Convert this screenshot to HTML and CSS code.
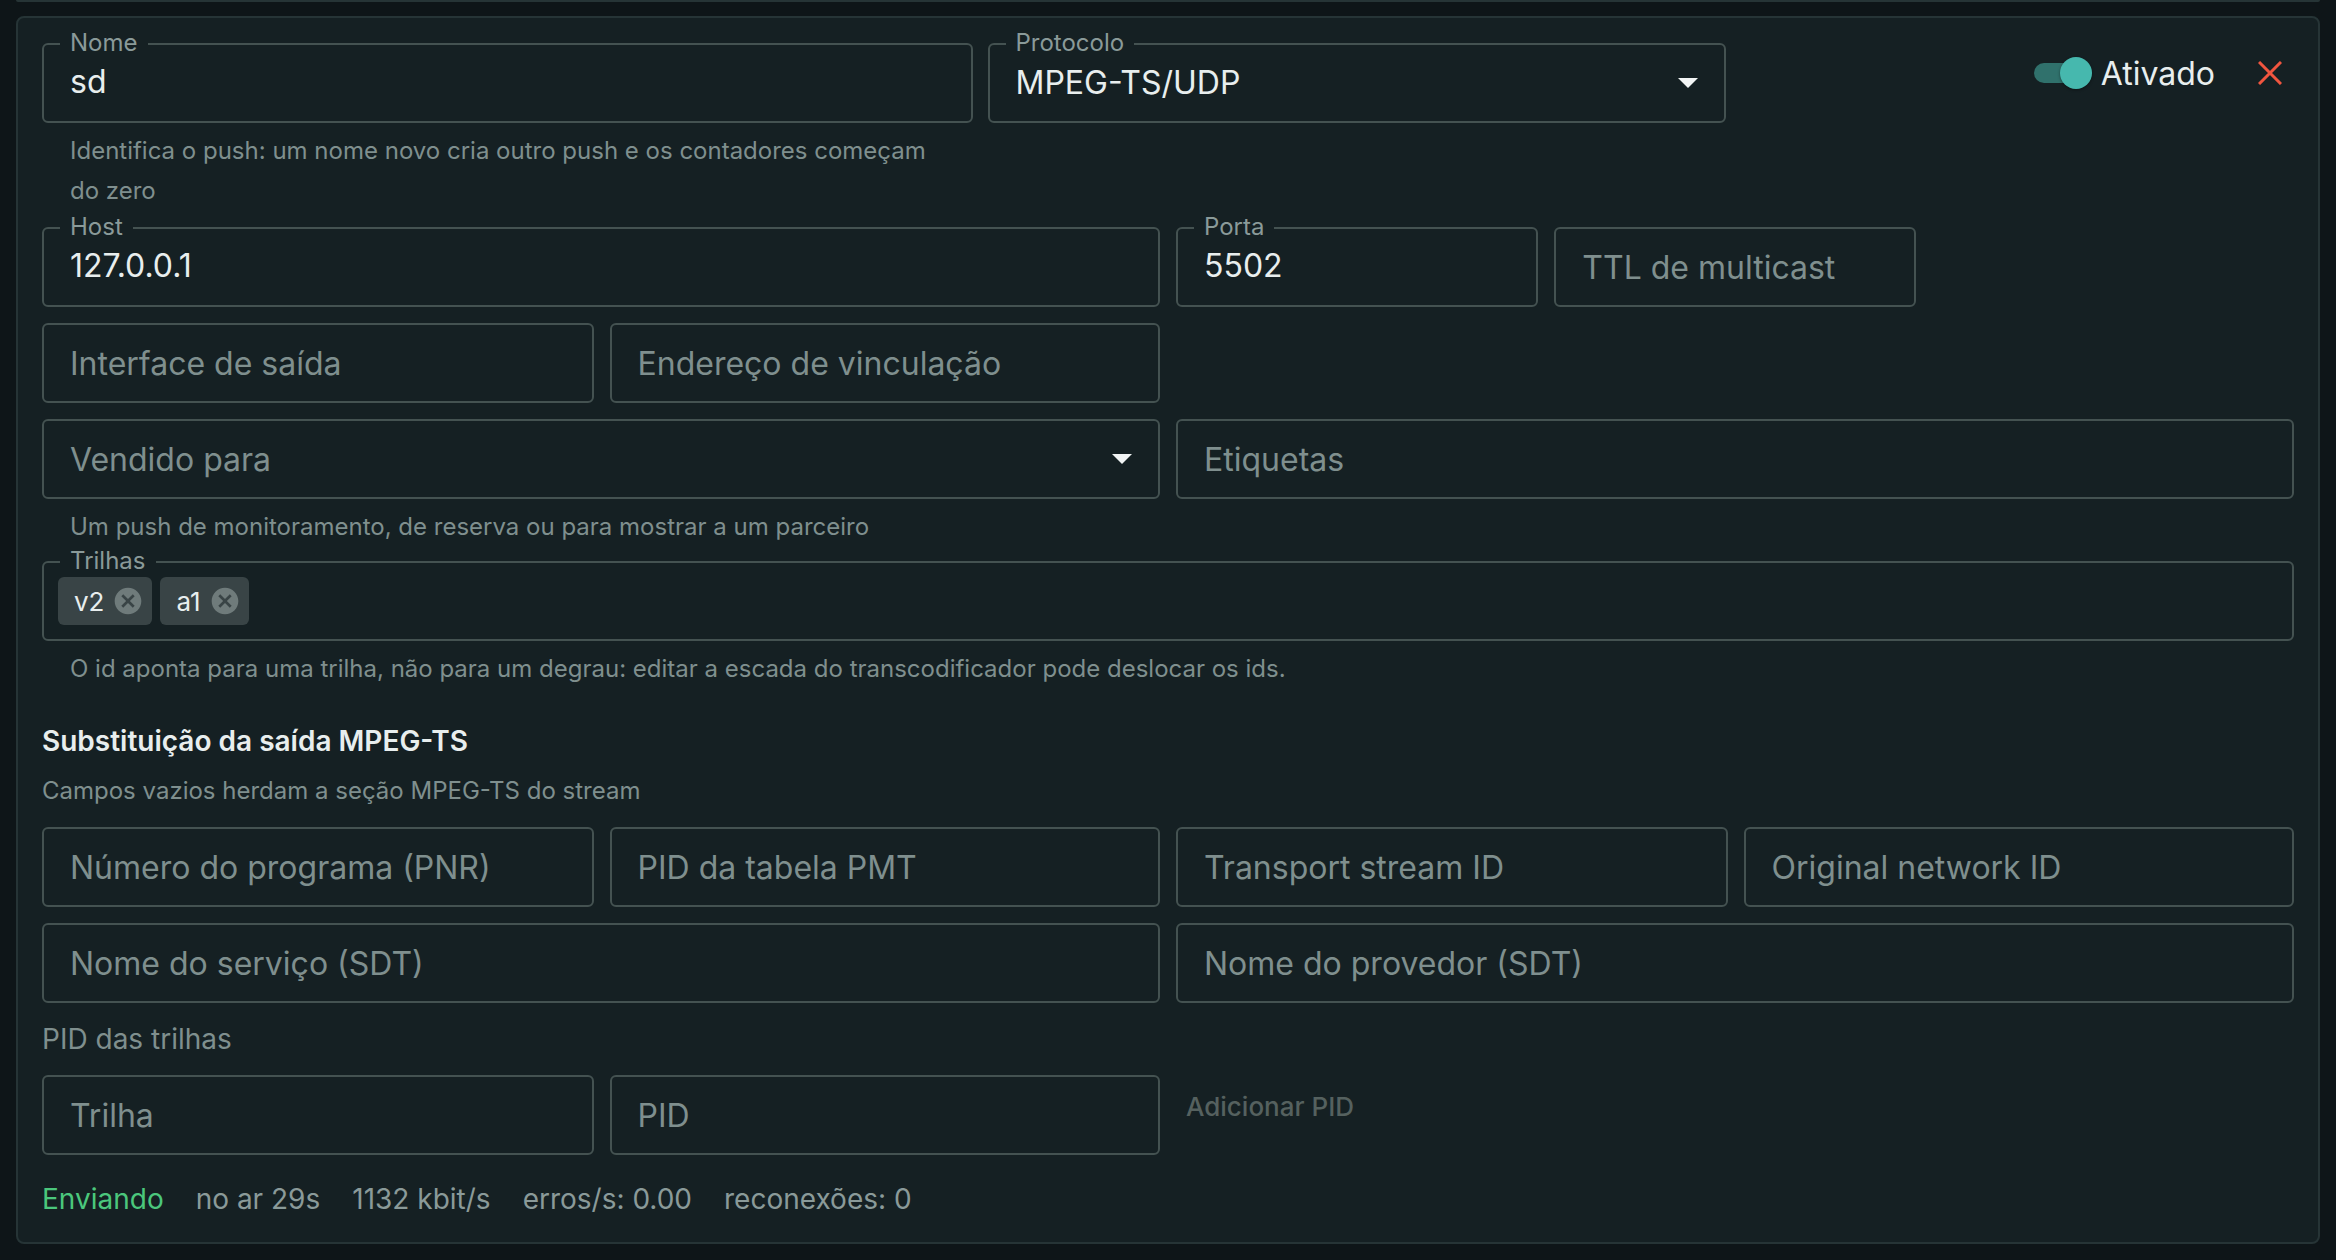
FILE: index.html
```html
<!DOCTYPE html>
<html lang="pt">
<head>
<meta charset="utf-8">
<title>Push</title>
<link rel="stylesheet" href="styles.css">
</head>
<body>
<div class="prev-card"></div>
<main class="card">
  <div class="top-row">
    <div>
      <label class="field labelled"><span class="field-label">Nome</span><input class="control" value="sd"></label>
      <p class="helper">Identifica o push: um nome novo cria outro push e os contadores começam do zero</p>
    </div>
    <div>
      <div class="field labelled select"><span class="field-label">Protocolo</span><span class="select-value">MPEG-TS/UDP</span><svg class="caret" viewBox="0 0 20 10"><path d="M0 0h20L10 10z"/></svg></div>
    </div>
    <div class="actions">
      <span class="switch"><span class="track"></span><span class="thumb"></span></span>
      <span class="switch-label">Ativado</span>
      <button class="close" type="button" aria-label="Fechar"><svg viewBox="0 0 24 24"><path d="M1 1l22 22M23 1L1 23"/></svg></button>
    </div>
  </div>

  <div class="grid">
    <label class="field labelled span-6"><span class="field-label">Host</span><input class="control" value="127.0.0.1"></label>
    <label class="field labelled span-2"><span class="field-label">Porta</span><input class="control" value="5502"></label>
    <label class="field span-2"><input class="control" placeholder="TTL de multicast"></label>
    <div class="span-2"></div>

    <label class="field span-3"><input class="control" placeholder="Interface de saída"></label>
    <label class="field span-3"><input class="control" placeholder="Endereço de vinculação"></label>
    <div class="span-6"></div>

    <div class="span-6">
      <div class="field select"><span class="select-placeholder">Vendido para</span><svg class="caret" viewBox="0 0 20 10"><path d="M0 0h20L10 10z"/></svg></div>
      <p class="helper helper-tight">Um push de monitoramento, de reserva ou para mostrar a um parceiro</p>
    </div>
    <label class="field span-6"><input class="control" placeholder="Etiquetas"></label>

    <div class="span-12">
      <div class="field labelled chips"><span class="field-label">Trilhas</span>
        <span class="chip">v2<svg viewBox="0 0 24 24"><path d="M12 2C6.47 2 2 6.47 2 12s4.47 10 10 10 10-4.47 10-10S17.53 2 12 2zm5 13.59L15.59 17 12 13.41 8.41 17 7 15.59 10.59 12 7 8.41 8.41 7 12 10.59 15.59 7 17 8.41 13.41 12 17 15.59z"/></svg></span>
        <span class="chip">a1<svg viewBox="0 0 24 24"><path d="M12 2C6.47 2 2 6.47 2 12s4.47 10 10 10 10-4.47 10-10S17.53 2 12 2zm5 13.59L15.59 17 12 13.41 8.41 17 7 15.59 10.59 12 7 8.41 8.41 7 12 10.59 15.59 7 17 8.41 13.41 12 17 15.59z"/></svg></span>
      </div>
      <p class="helper">O id aponta para uma trilha, não para um degrau: editar a escada do transcodificador pode deslocar os ids.</p>
    </div>
  </div>

  <h2 class="section-title">Substituição da saída MPEG-TS</h2>
  <p class="section-sub">Campos vazios herdam a seção MPEG-TS do stream</p>

  <div class="grid">
    <label class="field span-3"><input class="control" placeholder="Número do programa (PNR)"></label>
    <label class="field span-3"><input class="control" placeholder="PID da tabela PMT"></label>
    <label class="field span-3"><input class="control" placeholder="Transport stream ID"></label>
    <label class="field span-3"><input class="control" placeholder="Original network ID"></label>
    <label class="field span-6"><input class="control" placeholder="Nome do serviço (SDT)"></label>
    <label class="field span-6"><input class="control" placeholder="Nome do provedor (SDT)"></label>
  </div>

  <p class="pid-title">PID das trilhas</p>
  <div class="grid">
    <label class="field span-3"><input class="control" placeholder="Trilha"></label>
    <label class="field span-3"><input class="control" placeholder="PID"></label>
    <button class="add-pid span-3" type="button">Adicionar PID</button>
  </div>

  <div class="status">
    <span class="status-ok">Enviando</span>
    <span>no ar 29s</span>
    <span>1132 kbit/s</span>
    <span>erros/s: 0.00</span>
    <span>reconexões: 0</span>
  </div>
</main>
</body>
</html>
```
FILE: styles.css
```css
* { box-sizing: border-box; }
html, body { margin: 0; height: 100%; }
body {
  background: #0e1518;
  color: #e8eeee;
  font-family: Inter, "Liberation Sans", sans-serif;
  overflow: hidden;
}
p, h2 { margin: 0; }

.prev-card {
  height: 2px;
  margin: 0 16px;
  border-bottom: 2px solid #263436;
  border-radius: 0 0 8px 8px;
}
.card {
  margin: 14px 16px 0;
  height: 1228px;
  padding: 25px 24px 0;
  background: #152023;
  border: 2px solid #263436;
  border-radius: 8px;
}
.top-row {
  display: grid;
  grid-template-columns: 930.5fr 738.5fr 553fr;
  column-gap: 15px;
  margin-bottom: 16px;
}
.grid {
  display: grid;
  grid-template-columns: repeat(3, 1039fr) repeat(3, 1037fr) repeat(3, 1039fr) repeat(3, 1037fr);
  gap: 16px;
}
.span-2 { grid-column: span 2; }
.span-3 { grid-column: span 3; }
.span-6 { grid-column: span 6; }
.span-12 { grid-column: span 12; }

.field {
  position: relative;
  display: flex;
  align-items: center;
  height: 80px;
  border: 2px solid #445251;
  border-radius: 6px;
}
.field-label {
  position: absolute;
  top: -16px;
  left: 16px;
  padding: 0 10px;
  background: #152023;
  color: #8a9a99;
  font-size: 24px;
  line-height: 28px;
}
.control {
  width: 100%;
  height: 100%;
  padding: 0 26px;
  border: 0;
  outline: 0;
  background: transparent;
  color: #e8eeee;
  font: 32px/40px Inter, "Liberation Sans", sans-serif;
}
.labelled .control { padding-bottom: 4px; }
.control::placeholder { color: #7f8f8e; opacity: 1; }

.select { justify-content: space-between; padding: 0 26px; }
.select-value { font-size: 32px; margin-bottom: 2px; }
.select-placeholder { font-size: 32px; color: #7f8f8e; }
.caret { width: 20px; height: 10px; fill: #f2f5f5; }

.helper {
  margin-top: 8px;
  padding: 0 28px;
  color: #7f8f8e;
  font-size: 24px;
  line-height: 40px;
}
.helper-tight { margin-bottom: -2px; }

.actions {
  display: flex;
  align-items: center;
  justify-content: flex-end;
  height: 60px;
}
.switch { position: relative; width: 58px; height: 32px; margin-right: 9px; }
.track {
  position: absolute;
  left: 0;
  top: 6px;
  width: 50px;
  height: 20px;
  border-radius: 10px;
  background: #30716c;
}
.thumb {
  position: absolute;
  right: 0;
  top: 0;
  width: 32px;
  height: 32px;
  border-radius: 50%;
  background: #46b8ae;
  box-shadow: 0 1px 3px rgba(0, 0, 0, 0.4);
}
.switch-label { font-size: 32px; }
.close {
  display: flex;
  align-items: center;
  justify-content: center;
  width: 48px;
  height: 48px;
  margin-left: 31px;
  padding: 0;
  border: 0;
  background: none;
}
.close svg { width: 24px; height: 24px; fill: none; stroke: #f0553f; stroke-width: 3; }

.chips { padding-left: 14px; gap: 8px; }
.chip {
  display: flex;
  align-items: center;
  height: 48px;
  padding-left: 16px;
  border-radius: 6px;
  background: #394446;
  font-size: 26px;
}
.chip svg { width: 32px; height: 32px; margin: 0 8px; fill: #6f7b7b; }

.section-title {
  margin-top: 32px;
  font-size: 28px;
  font-weight: 600;
  line-height: 40px;
}
.section-sub {
  margin: 10px 0 16px;
  color: #7f8f8e;
  font-size: 24px;
  line-height: 40px;
}
.pid-title {
  margin: 16px 0;
  color: #7f8f8e;
  font-size: 28px;
  line-height: 40px;
}
.add-pid {
  align-self: start;
  justify-self: start;
  height: 62px;
  padding: 0 10px;
  border: 0;
  background: none;
  color: #55615f;
  font: 500 26px Inter, "Liberation Sans", sans-serif;
}
.status {
  display: flex;
  gap: 32px;
  margin-top: 24px;
  color: #8a9a99;
  font-size: 28px;
  line-height: 40px;
}
.status-ok { color: #4bc77c; }
```
